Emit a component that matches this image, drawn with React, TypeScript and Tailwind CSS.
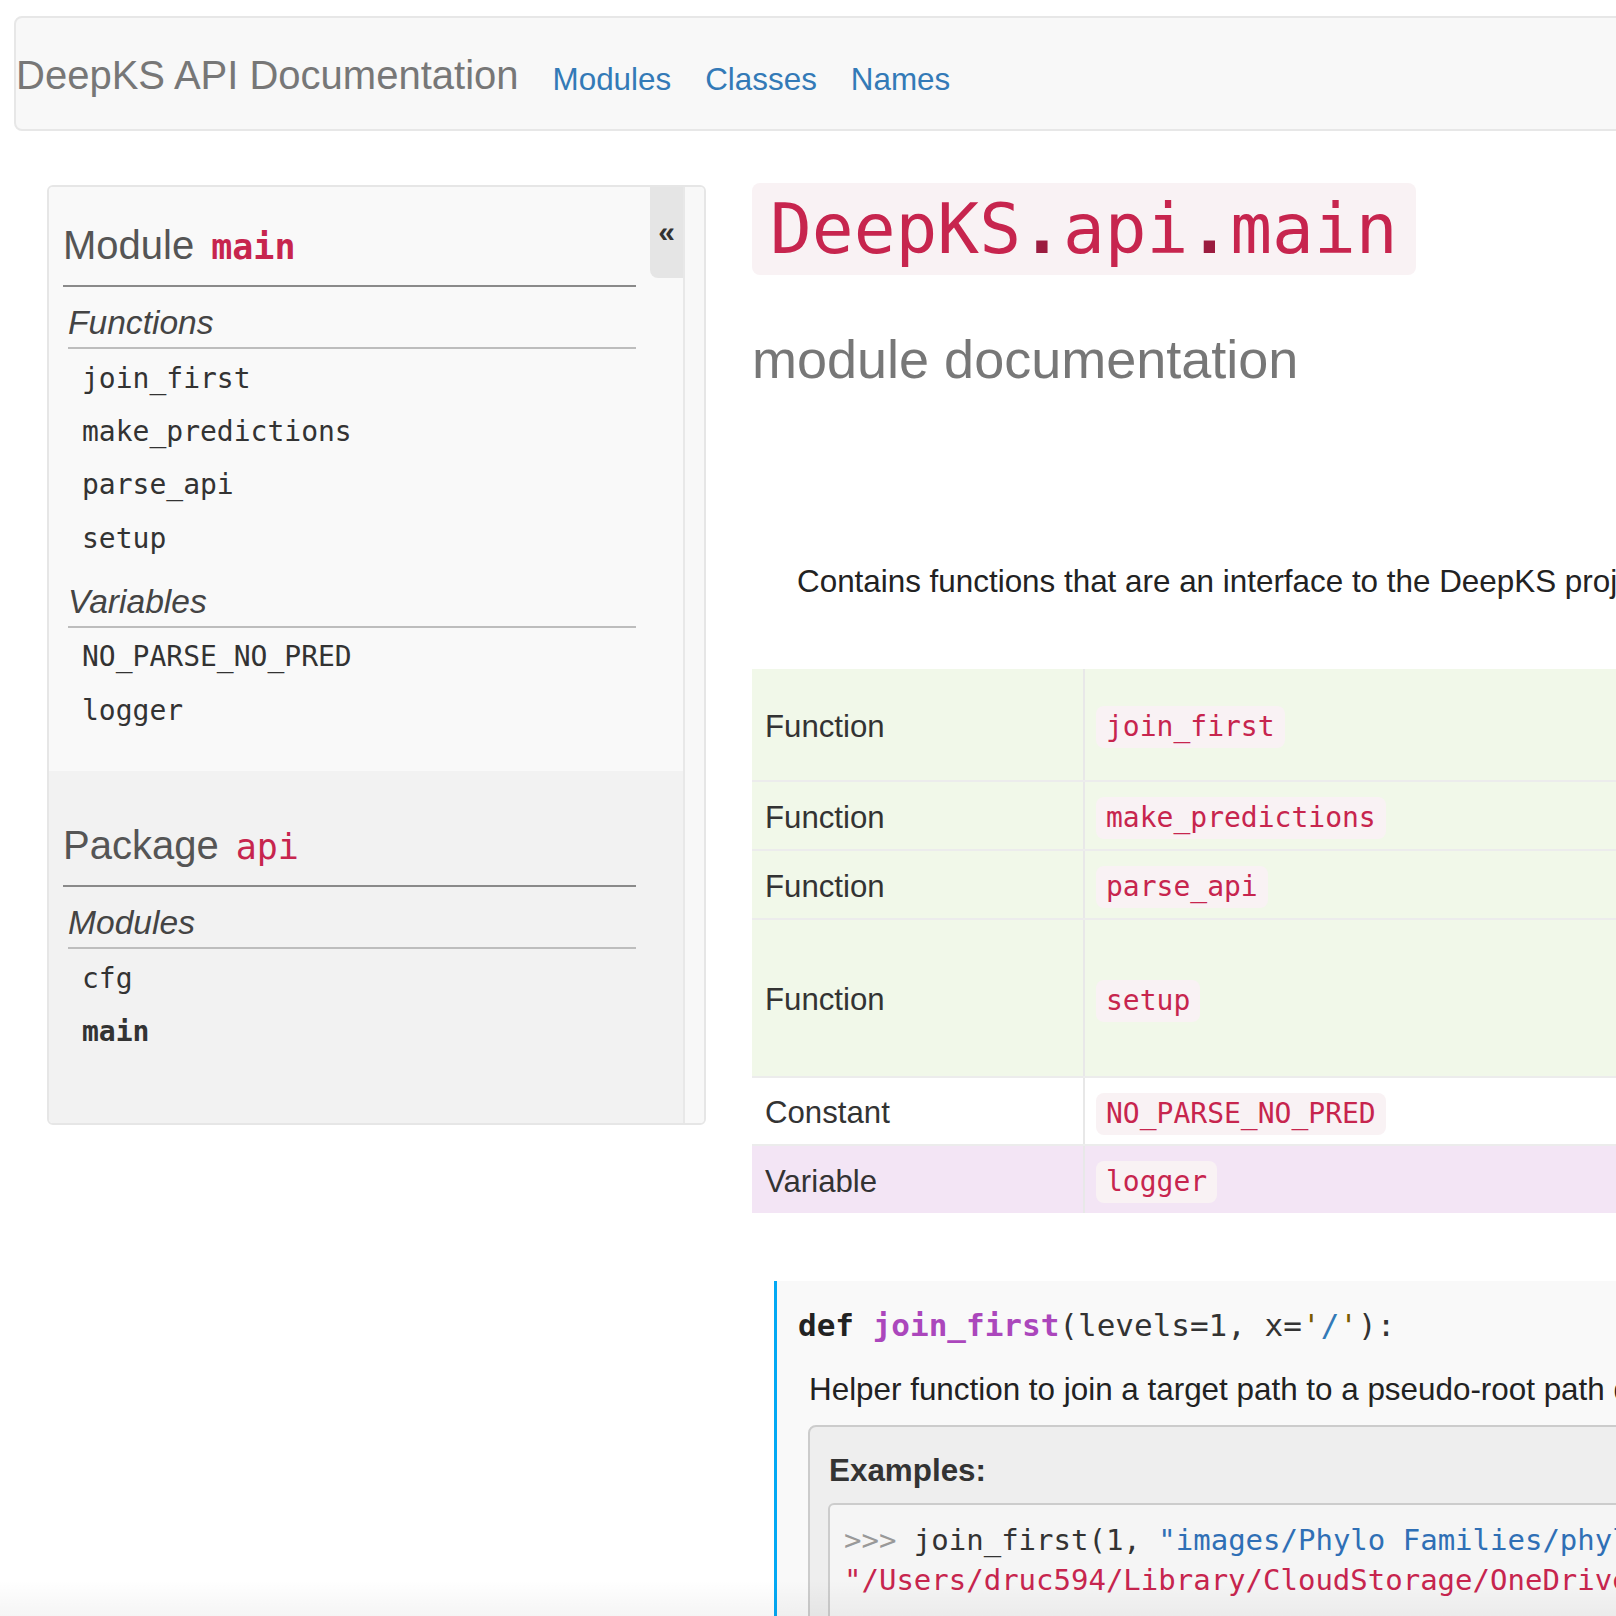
import React from 'react'

const mono = "font-['DejaVu_Sans_Mono','Liberation_Mono',monospace]"

function SideGroup({ title, items, bold }: { title: string; items: string[]; bold?: string }) {
  return (
    <div className="ml-[5px] w-[568px] mt-[16px]">
      <div className="text-[33.6px] leading-[40px] italic text-[#444] pb-[4px] border-b-2 border-[#bdbdbd]">
        {title}
      </div>
      <ul className="pt-[3px]">
        {items.map((it) => (
          <li
            key={it}
            className={`h-[53.4px] flex items-center pl-[14px] text-[28px] text-[#333] ${mono} ${it === bold ? 'font-bold' : ''}`}
          >
            {it}
          </li>
        ))}
      </ul>
    </div>
  )
}

function SideHeading({ label, name, bold }: { label: string; name: string; bold?: boolean }) {
  return (
    <div className="w-[573px] pb-[14px] border-b-2 border-[#8a8a8a] text-[40px] leading-[48px] text-[#555]">
      {label}
      <span className={`ml-[17px] text-[35px] text-[#c7254e] ${mono} ${bold ? 'font-bold' : ''}`}>{name}</span>
    </div>
  )
}

const rows = [
  { kind: 'Function', name: 'join_first', h: 'h-[111px]', bg: 'bg-[#f1f8e9]' },
  { kind: 'Function', name: 'make_predictions', h: 'h-[69px]', bg: 'bg-[#f1f8e9]' },
  { kind: 'Function', name: 'parse_api', h: 'h-[69px]', bg: 'bg-[#f1f8e9]' },
  { kind: 'Function', name: 'setup', h: 'h-[158px]', bg: 'bg-[#f1f8e9]' },
  { kind: 'Constant', name: 'NO_PARSE_NO_PRED', h: 'h-[68px]', bg: 'bg-white' },
  { kind: 'Variable', name: 'logger', h: 'h-[69px]', bg: 'bg-[#f3e5f5]' },
]

export default function App() {
  return (
    <div className="relative w-[1616px] h-[1616px] overflow-hidden bg-white font-['Liberation_Sans',Arial,sans-serif] text-[#333]">
      {/* Navbar */}
      <nav className="mt-[16px] ml-[14px] w-[1700px] h-[115px] flex items-center bg-[#f8f8f8] border-2 border-[#e7e7e7] rounded-l-[8px]">
        <span className="mt-[2px] text-[40px] leading-none text-[#777]">DeepKS API Documentation</span>
        {['Modules', 'Classes', 'Names'].map((l) => (
          <a key={l} className="ml-[34px] mt-[12px] text-[31.4px] leading-none text-[#337ab7]">
            {l}
          </a>
        ))}
      </nav>

      <div className="flex items-start mt-[54px]">
        {/* Sidebar */}
        <aside className="shrink-0 ml-[47px] w-[659px] h-[940px] flex border-2 border-[#e6e6e6] rounded-[6px] overflow-hidden">
          <div className="relative flex-1 flex flex-col">
            <div className="h-[584px] bg-[#f9f9f9] pl-[14px] pt-[34px]">
              <SideHeading label="Module" name="main" bold />
              <SideGroup title="Functions" items={['join_first', 'make_predictions', 'parse_api', 'setup']} />
              <SideGroup title="Variables" items={['NO_PARSE_NO_PRED', 'logger']} />
            </div>
            <div className="flex-1 bg-[#f2f2f2] pl-[14px] pt-[50px]">
              <SideHeading label="Package" name="api" />
              <SideGroup title="Modules" items={['cfg', 'main']} bold="main" />
            </div>
            <button className="absolute top-0 right-0 w-[33px] h-[91px] bg-[#e5e5e5] rounded-bl-[8px] flex items-start justify-center pt-[30px] text-[30px] leading-none font-bold text-[#333]">
              «
            </button>
          </div>
          <div className="shrink-0 w-[21px] border-l-2 border-[#e8e8e8] bg-[#f8f8f8]" />
        </aside>

        {/* Main content */}
        <main className="shrink-0 ml-[46px] -mt-[2px] w-[1000px]">
          <div className="w-[664px] h-[92px] bg-[#f9f2f4] rounded-[8px] pl-[18px] flex items-center">
            <h1 className={`${mono} text-[69.5px] leading-none text-[#c7254e]`}>
              DeepKS<span className="font-bold text-[#9b1c3f]">.</span>api<span className="font-bold text-[#9b1c3f]">.</span>main
            </h1>
          </div>

          <h2 className="mt-[52px] text-[54px] leading-[64px] text-[#777]">module documentation</h2>

          <p className="mt-[171px] pl-[45px] text-[31.4px] leading-[40px] text-[#222] whitespace-nowrap">
            Contains functions that are an interface to the DeepKS project.
          </p>

          <div className="mt-[67px] w-[1000px]">
            {rows.map((r, i) => (
              <div
                key={r.name}
                className={`flex pt-[5px] ${r.h} ${r.bg} ${i > 0 ? 'border-t-2 border-[#ececec]' : ''}`}
              >
                <div className="shrink-0 w-[333px] pl-[13px] flex items-center border-r-2 border-[#e8e8e8] -mt-[5px] pt-[5px] text-[31.2px] text-[#333]">
                  {r.kind}
                </div>
                <div className="pl-[11px] flex items-center">
                  <code className={`${mono} h-[42px] px-[10px] flex items-center rounded-[8px] bg-[#f9f2f4] text-[28px] text-[#c7254e]`}>
                    {r.name}
                  </code>
                </div>
              </div>
            ))}
          </div>

          {/* Function detail */}
          <section className="mt-[68px] ml-[22px] w-[1000px] border-l-[3px] border-[#03a9f4] bg-[#f9f9f9] pt-[24px] pb-[40px]">
            <div className={`${mono} pl-[21px] text-[31px] leading-[40px] text-[#333] whitespace-nowrap`}>
              <span className="font-bold text-[#222]">def</span>{' '}
              <span className="font-bold text-[#ab47bc]">join_first</span>(levels=1, x=
              <span className="text-[#7a5c00]">'</span>
              <span className="text-[#337ab7]">/</span>
              <span className="text-[#7a5c00]">'</span>):
            </div>
            <p className="mt-[25px] pl-[32px] text-[31.4px] leading-[40px] text-[#222] whitespace-nowrap">
              Helper function to join a target path to a pseudo-root path derived from the location of this file.
            </p>
            <div className="mt-[15px] ml-[31px] border-2 border-[#cccccc] rounded-[8px] bg-[#eeeeee] pt-[24px] pb-[30px]">
              <div className="pl-[19px] text-[31.4px] leading-[40px] font-bold text-[#333]">Examples:</div>
              <pre className={`${mono} mt-[12px] ml-[18px] border-2 border-[#cccccc] rounded-[6px] bg-[#f5f5f5] pl-[14px] pt-[15px] pb-[20px] text-[29px] leading-[40px] text-[#333] overflow-hidden`}>
                <span className="text-[#999]">&gt;&gt;&gt;</span> join_first(1,{' '}
                <span className="text-[#2f6fb5]">"images/Phylo Families/phylogenetic_leaves.cfg"</span>)
                {'\n'}
                <span className="text-[#c7254e]">"/Users/druc594/Library/CloudStorage/OneDrive-PNNL/Desktop/DeepKS/images/Phylo Families/phylogenetic_leaves.cfg"</span>
              </pre>
            </div>
          </section>
        </main>
      </div>

      {/* bottom fade */}
      <div className="absolute bottom-0 left-0 right-0 h-[36px] bg-gradient-to-b from-transparent to-black/[0.04] pointer-events-none" />
    </div>
  )
}
